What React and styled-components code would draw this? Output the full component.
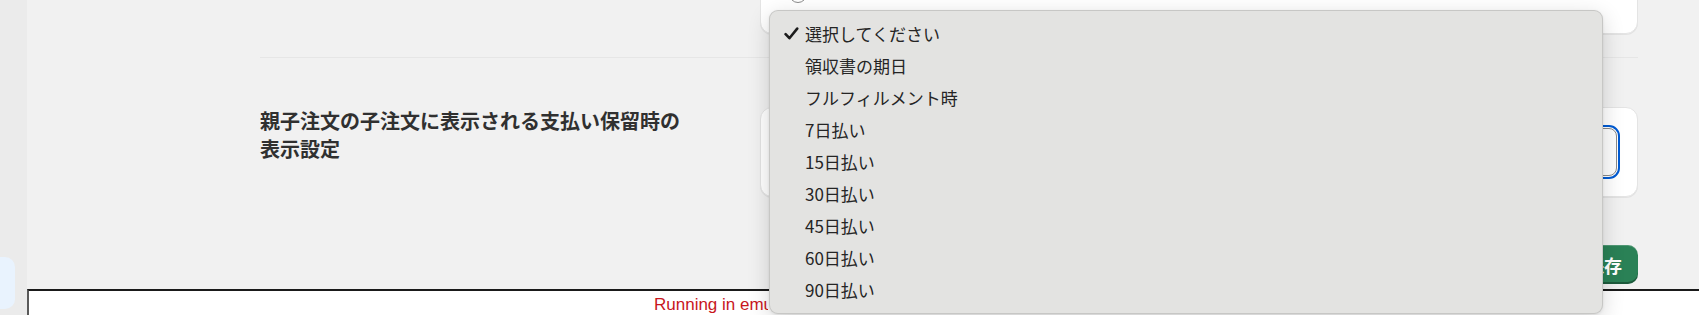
import React from 'react';
import styled, { createGlobalStyle } from 'styled-components';

const GlobalStyle = createGlobalStyle`
  html, body {
    margin: 0;
    padding: 0;
  }
  body {
    background: #f1f1f1;
    font-family: "Noto Sans CJK JP", "Noto Sans", sans-serif;
    overflow: hidden;
  }
`;

const options = [
  '選択してください',
  '領収書の期日',
  'フルフィルメント時',
  '7日払い',
  '15日払い',
  '30日払い',
  '45日払い',
  '60日払い',
  '90日払い',
];

function Check() {
  return (
    <svg width="15" height="13" viewBox="0 0 15 13" fill="none">
      <path d="M1.6 7.2 L5.4 11.2 L13.2 1.6" stroke="#1c1c1c" strokeWidth="2.6" strokeLinecap="round" strokeLinejoin="round" />
    </svg>
  );
}

export default function App() {
  return (
    <>
      <GlobalStyle />
      <Page>
        <Sidebar>
          <NavItem />
        </Sidebar>
        <Main>
          <Content>
            <Section>
              <Row>
                <span />
                <Card $top>
                  <Radio />
                </Card>
              </Row>
              <Divider />
              <Row>
                <Label>親子注文の子注文に表示される支払い保留時の表示設定</Label>
                <Card>
                  <Select />
                </Card>
              </Row>
              <Footer>
                <SaveButton>保存</SaveButton>
              </Footer>
            </Section>
          </Content>
          <EmulatorBar>
            <Clip>Running in emulator mode. Do not use with production credentials.</Clip>
          </EmulatorBar>
        </Main>
        <Menu>
          {options.map((o, i) => (
            <MenuItem key={o}>
              <CheckSlot>{i === 0 && <Check />}</CheckSlot>
              {o}
            </MenuItem>
          ))}
        </Menu>
      </Page>
    </>
  );
}

const Page = styled.div`
  position: relative;
  display: flex;
  height: 315px;
  overflow: hidden;
`;

const Sidebar = styled.aside`
  width: 27px;
  flex-shrink: 0;
  background: #ebebeb;
  display: flex;
  flex-direction: column;
  justify-content: flex-end;
  padding-bottom: 6px;
  box-sizing: border-box;
`;

const NavItem = styled.div`
  width: 15px;
  height: 52px;
  background: #e9f3fe;
  border-radius: 0 10px 10px 0;
`;

const Main = styled.main`
  flex: 1;
  min-width: 0;
  display: flex;
  flex-direction: column;
  background: #f1f1f1;
`;

const Content = styled.div`
  height: 289px;
  flex-shrink: 0;
  overflow: hidden;
  padding: 0 61px 0 233px;
  box-sizing: border-box;
`;

const Section = styled.section`
  margin-top: -46px;
  display: flex;
  flex-direction: column;
`;

const Row = styled.div`
  display: grid;
  grid-template-columns: 500px 1fr;
  align-items: start;
`;

const Card = styled.div`
  background: #fff;
  border: 1px solid #e4e4e4;
  border-radius: 12px;
  box-shadow: 0 1px 0 rgba(0, 0, 0, 0.06);
  box-sizing: border-box;
  padding: ${(p) => (p.$top ? '0 28px 30px' : '20px')};
  height: ${(p) => (p.$top ? '80px' : 'auto')};
  display: flex;
  align-items: flex-end;
`;

const Radio = styled.div`
  width: 18px;
  height: 18px;
  border-radius: 50%;
  border: 1px solid #8a8a8a;
  box-sizing: border-box;
`;

const Divider = styled.hr`
  border: none;
  height: 1px;
  background: #e6e6e6;
  margin: 23px 0 49px;
`;

const Label = styled.h3`
  margin: 0;
  max-width: 430px;
  font-size: 20px;
  font-weight: 600;
  line-height: 28px;
  color: #303030;
`;

const Select = styled.div`
  flex: 1;
  height: 48px;
  border: 1px solid #8a8a8a;
  border-radius: 8px;
  box-sizing: border-box;
  outline: 2px solid #005bd3;
  outline-offset: 1px;
  background: #fdfdfd;
`;

const Footer = styled.div`
  display: flex;
  justify-content: flex-end;
  margin-top: 48px;
`;

const SaveButton = styled.button`
  height: 39px;
  padding: 0 16px;
  border: none;
  border-radius: 10px;
  background: #2a8156;
  color: #fff;
  font-family: inherit;
  font-size: 18px;
  font-weight: 600;
  box-shadow: inset 0 -2px 0 rgba(0, 0, 0, 0.3), inset 0 1px 0 rgba(255, 255, 255, 0.18);
`;

const EmulatorBar = styled.div`
  flex: 1;
  background: #fff;
  border-top: 2px solid #1a1a1a;
  border-left: 2px solid #5a5a5a;
  padding: 3px 0 0 625px;
  font-family: "Liberation Sans", Arial, sans-serif;
  font-size: 17px;
  line-height: 22px;
  color: #c8161d;
  white-space: nowrap;
  overflow: hidden;
`;

const Clip = styled.span`
  display: inline-block;
  max-width: 114px;
  overflow: hidden;
  vertical-align: top;
`;

const Menu = styled.div`
  position: absolute;
  left: 769px;
  top: 10px;
  width: 834px;
  box-sizing: border-box;
  padding: 6px 0 8px;
  background: #e3e3e1;
  border: 1px solid rgba(0, 0, 0, 0.12);
  border-radius: 9px;
  box-shadow: 0 6px 22px rgba(0, 0, 0, 0.16), 0 1px 3px rgba(0, 0, 0, 0.08);
`;

const MenuItem = styled.div`
  height: 32px;
  display: flex;
  align-items: center;
  padding-left: 14px;
  font-size: 17px;
  color: #252525;
`;

const CheckSlot = styled.span`
  width: 21px;
  display: flex;
  align-items: center;
`;
